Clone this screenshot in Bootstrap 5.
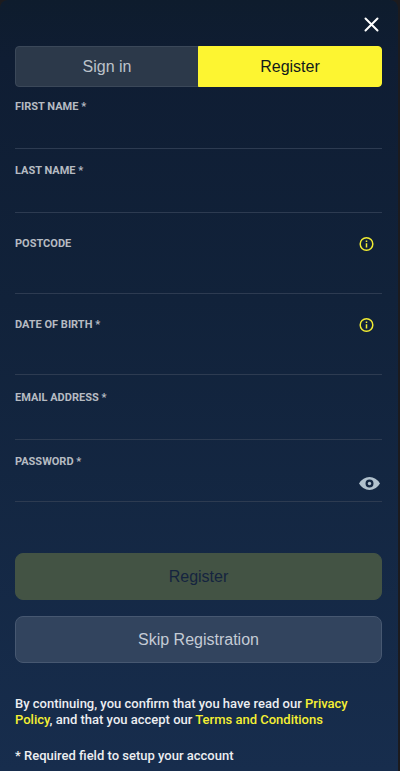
<!DOCTYPE html>
<html lang="en">
<head>
<meta charset="utf-8">
<meta name="viewport" content="width=device-width, initial-scale=1">
<title>Register</title>
<link href="https://cdn.jsdelivr.net/npm/bootstrap@5.3.0/dist/css/bootstrap.min.css" rel="stylesheet">
<style>
body { background: #1c1b1e; font-family: "Liberation Sans", Arial, sans-serif; }
.panel { background: linear-gradient(#0e1c2d 0, #0f1d33 60px, #11223a 300px, #172d4d 100%); border-radius: 8px 8px 0 0; margin-right: 2px; padding: 14px 16px 0 15px; min-height: 100vh; color: #eceef1; }
.close-btn { width: 20px; height: 20px; line-height: 0; color: #fff; }
.tab-btn { height: 41px; border-radius: 4px; font-size: 16px; line-height: 24px; color: #bcc2ca; background: #2c394a; border-color: #3b4859; }
.tab-btn:hover { color: #fff; }
.tab-btn.active { background: #fdf531; border-color: #fdf531; color: #111a1c; }
.field { margin-bottom: 14px; }
.field-tall { margin-top: 23px; margin-bottom: 23px; }
.field-label { font-family: Roboto, Arial, sans-serif; font-size: 11px; line-height: 16px; font-weight: 700; color: #b6bbc2; }
.line-input { height: 34px; border: 0; border-bottom: 1px solid #2d3b51; border-radius: 0; background: transparent; color: #fff; padding: 0; font-size: 16px; box-shadow: none; }
.line-input:focus { background: transparent; color: #fff; box-shadow: none; border-color: #fdf531; }
.field-tall .line-input { height: 42px; }
.field-last .line-input { height: 32px; }
.before-email { margin-bottom: 15px; }
.info-btn { color: #f1ec32; width: 16px; height: 16px; line-height: 0; margin-right: 8px; }
.eye-btn { color: #b1c1cd; line-height: 0; }
.main-btn { height: 47px; border-radius: 8px; font-size: 16px; line-height: 24px; }
.submit-btn, .submit-btn:disabled { background: #435344; border-color: #435344; color: #15243f; opacity: 1; margin-top: 51px; }
.skip-btn { background: #32445e; border-color: #475871; color: #c4cbd5; margin-top: 16px; }
.skip-btn:hover { background: #3c4f6b; color: #fff; }
.legal { font-family: Roboto, Arial, sans-serif; font-size: 13px; line-height: 16px; font-weight: 500; }
.legal a { color: #f5f033; text-decoration: none; }
.terms { margin-top: 33px; margin-bottom: 20px; }
</style>
</head>
<body>
<main class="panel">
  <div class="d-flex justify-content-end">
    <button type="button" class="close-btn btn p-0 border-0" aria-label="Close">
      <svg width="20" height="20" viewBox="0 0 20 20" fill="none" stroke="currentColor" stroke-width="2" stroke-linecap="round"><path d="M3.500 4.500l12 12M15.500 4.500l-12 12"/></svg>
    </button>
  </div>
  <div class="btn-group d-flex mt-2 pt-1 pb-2 mb-1" role="group" aria-label="Account">
    <button type="button" class="tab-btn btn w-50">Sign in</button>
    <button type="button" class="tab-btn btn w-50 active" aria-pressed="true">Register</button>
  </div>
  <form>
    <div class="field">
      <label class="field-label d-block" for="first">FIRST NAME *</label>
      <input class="line-input form-control" id="first" type="text">
    </div>
    <div class="field">
      <label class="field-label d-block" for="last">LAST NAME *</label>
      <input class="line-input form-control" id="last" type="text">
    </div>
    <div class="field-tall">
      <div class="d-flex justify-content-between align-items-center">
        <label class="field-label" for="postcode">POSTCODE</label>
        <button type="button" class="info-btn btn p-0 border-0" aria-label="About postcode">
          <svg width="16" height="16" viewBox="0 0 16 16" fill="none" stroke="currentColor" stroke-width="1.500"><circle cx="8.500" cy="8" r="6.300"/><path d="M8.500 7.300v4.200M8.500 4.600v1.500"/></svg>
        </button>
      </div>
      <input class="line-input form-control" id="postcode" type="text">
    </div>
    <div class="field-tall before-email">
      <div class="d-flex justify-content-between align-items-center">
        <label class="field-label" for="dob">DATE OF BIRTH *</label>
        <button type="button" class="info-btn btn p-0 border-0" aria-label="About date of birth">
          <svg width="16" height="16" viewBox="0 0 16 16" fill="none" stroke="currentColor" stroke-width="1.500"><circle cx="8.500" cy="8" r="6.300"/><path d="M8.500 7.300v4.200M8.500 4.600v1.500"/></svg>
        </button>
      </div>
      <input class="line-input form-control" id="dob" type="text">
    </div>
    <div class="field">
      <label class="field-label d-block" for="email">EMAIL ADDRESS *</label>
      <input class="line-input form-control" id="email" type="email">
    </div>
    <div class="field-last">
      <label class="field-label d-block" for="password">PASSWORD *</label>
      <div class="position-relative">
        <input class="line-input form-control pe-4" id="password" type="password">
        <button type="button" class="eye-btn btn p-0 pb-1 border-0 position-absolute end-0 top-50 translate-middle-y" aria-label="Show password">
          <svg width="24" height="16" viewBox="0 0 24 16"><path fill="currentColor" fill-rule="evenodd" d="M1 7.500Q5 1 11.500 1T22 7.500Q18 14 11.500 14T1 7.500ZM11.500 3.500a4 4 0 1 0 0 8a4 4 0 1 0 0-8Z"/><circle cx="11.500" cy="7.500" r="1.700" fill="currentColor"/></svg>
        </button>
      </div>
    </div>
    <button type="submit" class="main-btn submit-btn btn w-100" disabled>Register</button>
    <button type="button" class="main-btn skip-btn btn w-100">Skip Registration</button>
  </form>
  <p class="legal terms">By continuing, you confirm that you have read our <a href="#privacy">Privacy Policy</a>, and that you accept our <a href="#terms">Terms and Conditions</a></p>
  <p class="legal mb-0">* Required field to setup your account</p>
</main>
<script src="https://cdn.jsdelivr.net/npm/bootstrap@5.3.0/dist/js/bootstrap.bundle.min.js"></script>
</body>
</html>
